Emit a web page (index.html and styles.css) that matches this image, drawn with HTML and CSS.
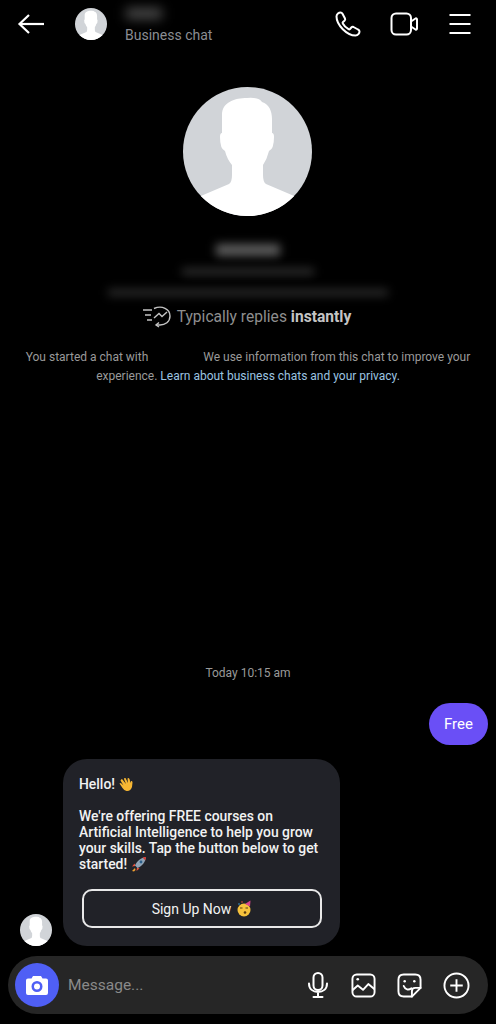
FILE: index.html
```html
<!DOCTYPE html>
<html lang="en">

<head>
    <meta charset="UTF-8">
    <meta name="viewport" content="width=device-width, initial-scale=1.0">
    <title>Business chat</title>
    <link rel="stylesheet" href="styles.css">
</head>

<body>
    <svg class="defs" width="0" height="0">
        <symbol id="person" viewBox="0 0 129 129">
            <circle cx="64.5" cy="64.5" r="64.5" fill="#d1d4d8" />
            <path fill="#fff" d="M17.800 109 L46 97 Q49 95 49 88 L49 78 Q44 72 42 64 Q37 62 37 50 Q37 46 39 46 L39 28 C39 15 52 11 64 11 Q76 10 79 15 C86 17 89 24 89 32 L89 46 Q91 46 91 50 Q91 62 86 64 Q84 72 80 78 L80 88 Q80 95 83 97 L111.200 109 A64.5 64.5 0 0 1 17.800 109 Z" />
        </symbol>
    </svg>

    <div class="app">
        <!-- top bar -->
        <header class="topbar">
            <svg class="back" width="28" height="22" viewBox="0 0 28 22" fill="none" stroke="#fff" stroke-width="2.2">
                <path d="M27 11 H3" />
                <path d="M12 2 L2.5 11 L12 20" />
            </svg>
            <svg class="top-avatar" width="32" height="32"><use href="#person" /></svg>
            <div class="top-name">
                <div class="blur-name"></div>
                <div class="top-sub">Business chat</div>
            </div>
            <div class="top-actions">
                <svg width="26" height="26" viewBox="0 0 26 26" fill="none" stroke="#fff" stroke-width="2" stroke-linejoin="round">
                    <path d="M5.5 1.5 C4 1.5 1.5 3 1.5 5.5 C1.5 14 12 24.5 20.5 24.5 C23 24.5 24.5 22 24.5 20.5 C24.5 19.5 24 19 23 18.5 L18.5 16 C17.5 15.5 17 15.7 16.3 16.5 L15 18 C14.5 18.5 14 18.5 13.5 18.2 C11 16.8 9 14.7 7.8 12.5 C7.5 12 7.5 11.5 8 11 L9.5 9.7 C10.3 9 10.5 8.5 10 7.5 L7.5 2.7 C7 1.8 6.5 1.5 5.5 1.5 Z" />
                </svg>
                <svg width="29" height="24" viewBox="0 0 29 24" fill="none" stroke="#fff" stroke-width="2" stroke-linejoin="round">
                    <rect x="1.500" y="1.500" width="19.500" height="21" rx="4.500" />
                    <path d="M21 9.500 L25.500 6.500 Q27 6 27 7.500 V16.500 Q27 18 25.500 17.500 L21 14.500" />
                </svg>
                <svg width="24" height="22" viewBox="0 0 24 22" stroke="#fff" stroke-width="2">
                    <path d="M1.500 2 H22.500 M1.500 11 H22.500 M1.500 20 H22.500" />
                </svg>
            </div>
        </header>

        <!-- profile -->
        <section class="profile">
            <svg class="big-avatar" width="129" height="129"><use href="#person" /></svg>
            <div class="blur-title"></div>
            <div class="blur-meta"></div>
            <div class="blur-line"></div>
            <div class="replies">
                <svg width="30" height="22" viewBox="0 0 30 22" fill="none" stroke="#c4c4c4" stroke-width="1.4">
                    <path d="M1 4 H10 M3 9 H9 M5 14 H10" />
                    <path d="M12 2.5 C20 -1 28 3 28 10 C28 16 23 19 18 19 L14 19" />
                    <path d="M17 16.5 L14 19 L17 21" />
                    <path d="M12 12 L17 7.5 L20 10.5 L25 6" />
                </svg>
                <span>Typically replies <b>instantly</b></span>
            </div>
            <p class="notice">You started a chat with <span class="notice-gap"></span> We use information from this chat to improve your experience. <a class="notice-link">Learn about business chats and your privacy.</a></p>
        </section>

        <!-- messages -->
        <main class="thread">
            <div class="timestamp">Today 10:15 am</div>
            <div class="outgoing">
                <div class="bubble-out">Free</div>
            </div>
            <div class="incoming">
                <svg class="small-avatar" width="32" height="32"><use href="#person" /></svg>
                <div class="bubble-in">
                    <p>Hello!
                        <svg class="emoji" width="16" height="16" viewBox="0 0 16 16">
                            <path fill="#f7b733" d="M4 3 L8 8 L6 3 Q6 1.5 7.500 2 L10 7 L9.500 2.500 Q10.500 1.500 11.500 3 L12.500 7 L13 5 Q14.500 4.500 14.500 6.500 L14 11 Q12.500 15.500 8.500 15 Q6 14.500 4.500 12 L1.500 7.500 Q2 6.500 3.500 7.500 L5.500 9.500 L2.500 4.500 Q3 3 4 3 Z" />
                        </svg>
                    </p>
                    <p class="gap">We're offering FREE courses on Artificial Intelligence to help you grow your skills. Tap the button below to get started!
                        <svg class="emoji" width="16" height="16" viewBox="0 0 16 16">
                            <path fill="#e8503a" d="M3.500 7.500 L1 10.500 L4.500 10 Z M8.500 12.500 L5.500 15 L6 11.500 Z" />
                            <path fill="#f0a030" d="M4 12 L1 15 L3 15.500 L4.500 14 Z" />
                            <path fill="#8fa3b5" d="M4 9.500 C6 5 10 1.500 15 1 C14.500 6 11 10 6.500 12 Z" />
                            <path fill="#d9362b" d="M11.500 1.600 L15 1 L14.400 4.500 Z" />
                            <circle cx="10" cy="6" r="1.400" fill="#2c5f8a" />
                        </svg>
                    </p>
                    <div class="signup">Sign Up Now
                        <svg class="emoji" width="16" height="17" viewBox="0 0 16 17">
                            <circle cx="8" cy="10" r="6.500" fill="#f7c23c" />
                            <path fill="#d8458c" d="M9 4 L14.500 0.500 L14 6.500 Z" />
                            <path d="M4 8 H6.500 M9.500 8 H12" stroke="#5a3a10" stroke-width="1" />
                            <circle cx="9" cy="12.500" r="1.300" fill="#5a3a10" />
                            <circle cx="3" cy="4" r=".8" fill="#3aa0e0" />
                            <circle cx="6" cy="2" r=".8" fill="#e0503a" />
                        </svg>
                    </div>
                </div>
            </div>
        </main>

        <!-- composer -->
        <footer class="composer">
            <div class="camera">
                <svg width="24" height="21" viewBox="0 0 24 21">
                    <path fill="#fff" fill-rule="evenodd" d="M8 1 H16 L17.500 3.500 H21 Q23 3.500 23 5.500 V18 Q23 20 21 20 H3 Q1 20 1 18 V5.500 Q1 3.500 3 3.500 H6.500 Z M12 6 A5.500 5.500 0 1 0 12 17 A5.500 5.500 0 1 0 12 6 Z M12 8.500 A3 3 0 1 1 12 14.500 A3 3 0 1 1 12 8.500 Z" />
                </svg>
            </div>
            <div class="placeholder">Message...</div>
            <div class="tools">
                <svg class="mic" width="22" height="26" viewBox="0 0 22 26" fill="none" stroke="#fff" stroke-width="2" stroke-linecap="round">
                    <rect x="6.500" y="1" width="9" height="17" rx="4.500" />
                    <path d="M2 11.500 C2 17 6 20 11 20 C16 20 20 17 20 11.500 M11 20 V25 M6.500 25 H15.500" />
                </svg>
                <svg width="25" height="25" viewBox="0 0 26 26" fill="none" stroke="#fff" stroke-width="2" stroke-linejoin="round">
                    <rect x="1.500" y="1.500" width="23" height="23" rx="4.500" />
                    <path d="M1.500 18 L7 13 L12.500 17.500 L18 11.500 L24.500 17" />
                    <circle cx="7" cy="6.500" r="1.400" fill="#fff" stroke="none" />
                </svg>
                <svg width="25" height="25" viewBox="0 0 26 26" fill="none" stroke="#fff" stroke-width="2" stroke-linejoin="round" stroke-linecap="round">
                    <path d="M15.500 24.500 H7 Q1.500 24.500 1.500 19 V7 Q1.500 1.500 7 1.500 H19 Q24.500 1.500 24.500 7 V15.500 Z" />
                    <path d="M15.500 24.500 V19 Q15.500 15.500 19 15.500 H24.500" />
                    <path d="M7 13.500 C8.500 17.500 12 18 15 16" />
                    <circle cx="8" cy="8.500" r="1.300" fill="#fff" stroke="none" />
                    <circle cx="18" cy="8.500" r="1.300" fill="#fff" stroke="none" />
                </svg>
                <svg width="27" height="27" viewBox="0 0 28 28" fill="none" stroke="#fff" stroke-width="2">
                    <circle cx="14" cy="14" r="12.500" />
                    <path d="M14 7.500 V20.500 M7.500 14 H20.500" />
                </svg>
            </div>
        </footer>
    </div>
</body>

</html>
```

FILE: styles.css
```css
body {
    margin: 0;
    background-color: #000;
    font-family: Roboto, "Liberation Sans", sans-serif;
    color: #fff;
}

.defs {
    display: block;
    height: 0;
}

.app {
    display: flex;
    flex-direction: column;
    height: 1024px;
    overflow: hidden;
}

/* top bar */
.topbar {
    display: flex;
    align-items: center;
    height: 48px;
    padding-left: 17px;
    flex-shrink: 0;
}

.back {
    margin-right: 30px;
}

.top-avatar {
    margin-right: 18px;
}

.top-name {
    flex: 1;
}

.blur-name {
    width: 36px;
    height: 11px;
    margin: 2px 0 8px 1px;
    background: #4a4a4a;
    filter: blur(6px);
}

.top-sub {
    font-size: 14px;
    line-height: 16px;
    color: #8b8d93;
}

.top-actions {
    display: flex;
    align-items: center;
    gap: 29px;
    padding-right: 24px;
}

/* profile */
.profile {
    display: flex;
    flex-direction: column;
    align-items: center;
    padding-top: 39px;
}

.big-avatar {
    margin-left: -1px;
}

.blur-title {
    width: 64px;
    height: 12px;
    margin-top: 28px;
    background: #5c5c5c;
    filter: blur(5px);
}

.blur-meta {
    width: 132px;
    height: 7px;
    margin-top: 12px;
    background: #2e2e2e;
    filter: blur(5px);
}

.blur-line {
    width: 280px;
    height: 7px;
    margin-top: 14px;
    background: #2b2b2b;
    filter: blur(5px);
}

.replies {
    display: flex;
    align-items: center;
    gap: 5px;
    height: 22px;
    margin: 10px 0 0 -3px;
    font-size: 15.6px;
    color: #8e8e8e;
}

.replies b {
    font-weight: 700;
    color: #c4c4c4;
}

.notice {
    margin: 20px 0 0;
    padding: 0 24px;
    font-size: 12px;
    line-height: 19px;
    text-align: center;
    color: #9a9a9a;
}

.notice-gap {
    display: inline-block;
    width: 49px;
}

.notice-link {
    color: #9cc4e0;
}

/* messages */
.thread {
    flex: 1;
    display: flex;
    flex-direction: column;
    justify-content: flex-end;
}

.timestamp {
    font-size: 12px;
    line-height: 14px;
    text-align: center;
    color: #9a9a9a;
}

.outgoing {
    display: flex;
    justify-content: flex-end;
    margin-top: 23px;
    padding-right: 8px;
}

.bubble-out {
    width: 59px;
    height: 42px;
    border-radius: 21px;
    background: #6a4ff6;
    font-size: 15px;
    line-height: 42px;
    text-align: center;
}

.incoming {
    display: flex;
    align-items: flex-end;
    gap: 11px;
    margin-top: 14px;
    padding-left: 20px;
}

.bubble-in {
    box-sizing: border-box;
    width: 277px;
    height: 187px;
    padding: 17px 20px 0 16px;
    border-radius: 24px;
    background: #212228;
    font-size: 13.9px;
    font-weight: 500;
    line-height: 16px;
    color: #f2f2f2;
}

.bubble-in p {
    margin: 0;
}

.bubble-in .gap {
    margin-top: 16px;
}

.emoji {
    vertical-align: -3px;
}

.signup {
    display: flex;
    align-items: center;
    justify-content: center;
    gap: 5px;
    box-sizing: border-box;
    width: 240px;
    height: 39px;
    margin: 17px 0 0 3px;
    border: 2px solid #e8e8e8;
    border-radius: 10px;
    font-size: 14px;
    font-weight: 400;
}

/* composer */
.composer {
    display: flex;
    align-items: center;
    flex-shrink: 0;
    height: 58px;
    margin: 10px 8px;
    padding-left: 7px;
    border-radius: 29px;
    background: #262626;
}

.camera {
    display: flex;
    align-items: center;
    justify-content: center;
    width: 44px;
    height: 44px;
    border-radius: 50%;
    background: #4f5ff5;
}

.placeholder {
    flex: 1;
    margin-left: 9px;
    font-size: 15.5px;
    color: #8a8a8a;
}

.tools {
    display: flex;
    align-items: center;
    gap: 21px;
    padding-right: 18px;
}

.mic {
    margin-right: 1px;
}
```
